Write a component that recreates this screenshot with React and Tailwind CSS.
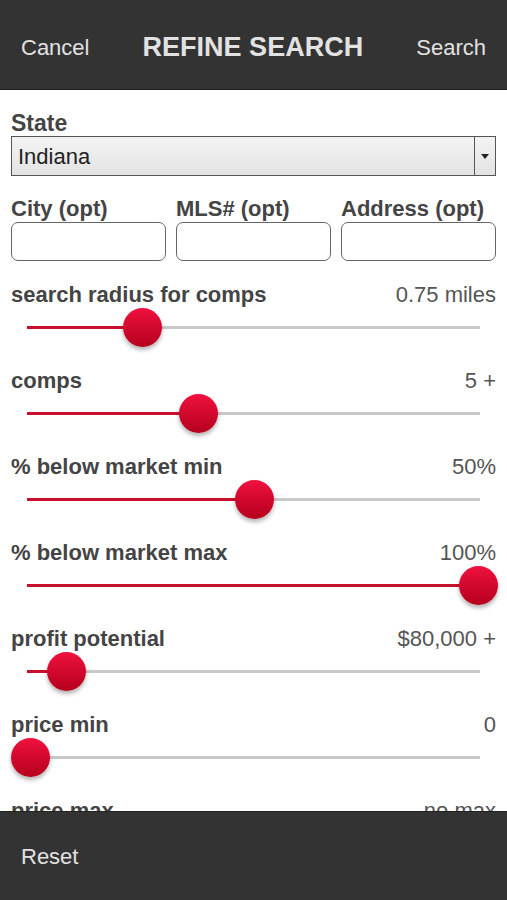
import React from "react";

const sliders = [
  { label: "search radius for comps", value: "0.75 miles", f: 0.25 },
  { label: "comps", value: "5 +", f: 0.375 },
  { label: "% below market min", value: "50%", f: 0.5 },
  { label: "% below market max", value: "100%", f: 1 },
  { label: "profit potential", value: "$80,000 +", f: 0.08 },
  { label: "price min", value: "0", f: 0 },
  { label: "price max", value: "no max", f: 1 },
];

function Slider({ label, value, f }) {
  const center = 19 + f * 448;
  return (
    <div className="h-[86px]">
      <div className="flex h-[26px] items-center justify-between text-[22px] leading-[26px]">
        <span className="font-bold text-[#444]">{label}</span>
        <span className="text-[#555]">{value}</span>
      </div>
      <div className="relative h-[38px]">
        <div className="absolute left-[16px] right-[16px] top-[18px] h-[3px] bg-[#c8c8c8]" />
        <div
          className="absolute left-[16px] top-[18px] h-[3px] bg-[#c8102e]"
          style={{ width: `${Math.min(center - 16, 454)}px` }}
        />
        <div
          className="absolute top-0 h-[39px] w-[39px] rounded-full bg-gradient-to-b from-[#f0113f] to-[#b5001d] shadow-[0_3px_4px_rgba(0,0,0,0.3)]"
          style={{ left: `${f * 448}px` }}
        />
      </div>
    </div>
  );
}

export default function App() {
  return (
    <div
      className="flex h-[900px] w-[507px] flex-col overflow-hidden bg-white"
      style={{ fontFamily: '"Liberation Sans", Arial, sans-serif' }}
    >
      <header className="flex h-[90px] shrink-0 items-center justify-between border-b border-[#222] bg-[#333] px-[21px] pt-[5px]">
        <span className="text-[22px] text-[#e2e2e2]">Cancel</span>
        <span className="text-[27px] font-bold text-[#e2e2e2]">REFINE SEARCH</span>
        <span className="text-[22px] text-[#e2e2e2]">Search</span>
      </header>

      <main className="flex-1 overflow-hidden px-[11px] pt-[20px]">
        <div className="text-[23px] font-bold leading-[26px] text-[#444]">State</div>
        <div className="flex h-[40px] border border-[#555] bg-gradient-to-b from-[#f3f3f3] via-[#ececec] to-[#e2e2e2]">
          <div className="flex flex-1 items-center pl-[6px] text-[22px] text-[#222]">Indiana</div>
          <div className="flex w-[21px] items-center justify-center border-l border-[#555]">
            <svg width="8" height="5" viewBox="0 0 8 5">
              <path d="M0 0h8L4 5z" fill="#222" />
            </svg>
          </div>
        </div>

        <div className="mt-[20px] grid grid-cols-3 gap-x-[10px]">
          {["City (opt)", "MLS# (opt)", "Address (opt)"].map((t) => (
            <div key={t}>
              <div className="whitespace-nowrap text-[22px] font-bold leading-[26px] text-[#444]">{t}</div>
              <div className="h-[39px] rounded-[7px] border-[1.5px] border-[#666] bg-white" />
            </div>
          ))}
        </div>

        <div className="mt-[21px]">
          {sliders.map((s) => (
            <Slider key={s.label} {...s} />
          ))}
        </div>
      </main>

      <footer className="flex h-[89px] shrink-0 items-center border-t border-[#222] bg-[#333] px-[21px]">
        <span className="text-[22px] text-[#e2e2e2]">Reset</span>
      </footer>
    </div>
  );
}
